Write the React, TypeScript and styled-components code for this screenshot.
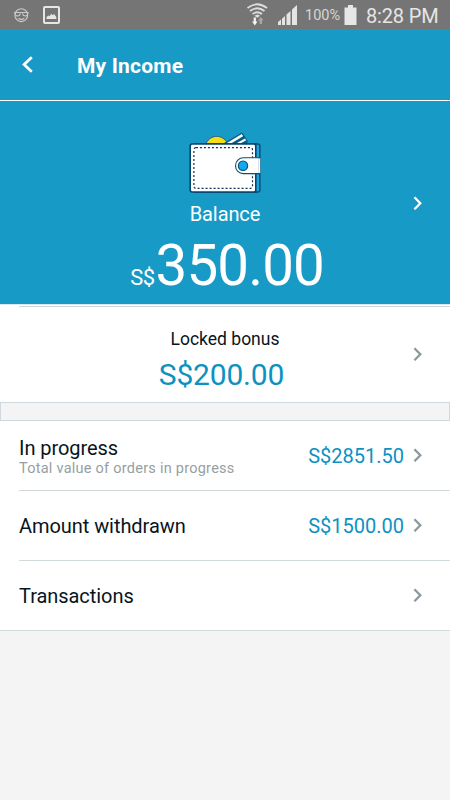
import React from 'react';
import styled, { createGlobalStyle } from 'styled-components';

const GlobalStyle = createGlobalStyle`
  * { box-sizing: border-box; }
  body { margin: 0; background: #f4f4f4; font-family: Roboto, sans-serif; }
`;

const Screen = styled.main`
  width: 450px;
  height: 800px;
  overflow: hidden;
  display: flex;
  flex-direction: column;
  background: #f4f4f4;
  color: #081420;
`;

const StatusBar = styled.header`
  height: 30px;
  flex: none;
  display: flex;
  justify-content: space-between;
  background: #757575;
  border-bottom: 1px solid #77797a;
  color: #e6e6e6;
`;

const StatusGroup = styled.div`
  display: flex;
`;

const BatteryLevel = styled.span`
  width: 39px;
  padding-top: 2px;
  font-size: 14.5px;
  line-height: 28px;
  color: #d6d6d6;
  white-space: nowrap;
`;

const Clock = styled.span`
  width: 85px;
  padding-left: 1px;
  padding-top: 1px;
  font-size: 20px;
  line-height: 30px;
  letter-spacing: -0.15px;
  white-space: nowrap;
`;

const TitleBar = styled.nav`
  height: 71px;
  flex: none;
  display: flex;
  align-items: center;
  gap: 43px;
  padding: 0 0 0 21px;
  background: #189ac6;
  border-bottom: 1px solid #fff;
  color: #fff;
`;

const BackButton = styled.button`
  width: 13px;
  height: 20px;
  padding: 0;
  border: 0;
  display: flex;
  background: none;
  color: inherit;
`;

const Title = styled.h1`
  margin: 2px 0 0;
  font-size: 21px;
  line-height: 24px;
  letter-spacing: 0.2px;
  font-weight: 700;
`;

const BalancePanel = styled.section`
  height: 203px;
  flex: none;
  display: grid;
  grid-template-columns: 37px 1fr 37px;
  background: #189ac6;
  color: #fff;
`;

const PanelContent = styled.div<{ $top: number }>`
  grid-column: 2;
  display: flex;
  flex-direction: column;
  align-items: center;
  padding-top: ${p => p.$top}px;
`;

const BalanceLabel = styled.div`
  margin-top: 7px;
  font-size: 20px;
  line-height: 26px;
  letter-spacing: -0.1px;
`;

const BalanceAmount = styled.div`
  margin: 6px 0 0 4px;
  display: flex;
  align-items: baseline;
  font-size: 56.5px;
  line-height: 66px;
  letter-spacing: -0.9px;
`;

const Currency = styled.span`
  margin-right: 1px;
  font-size: 22px;
  letter-spacing: -0.5px;
`;

const PanelArrow = styled.div<{ $top: number }>`
  grid-column: 3;
  padding-top: ${p => p.$top}px;
`;

const Divider = styled.div`
  height: 3px;
  flex: none;
  background: #fff;
  border-top: 1px solid #dbe8ed;
  &::after {
    content: '';
    display: block;
    height: 1px;
    margin: 1px 0 0 19px;
    background: #cdd6d9;
  }
`;

const BonusPanel = styled.section`
  height: 95px;
  flex: none;
  display: grid;
  grid-template-columns: 37px 1fr 37px;
  background: #fff;
`;

const BonusLabel = styled.div`
  font-size: 17.5px;
  line-height: 22px;
`;

const BonusAmount = styled.div`
  margin-top: 7px;
  margin-right: 7px;
  font-size: 30px;
  line-height: 36px;
  letter-spacing: -0.2px;
  color: #0c92c1;
`;

const Spacer = styled.div`
  height: 19px;
  flex: none;
  border: 1px solid #cfd8dc;
  background: #f4f4f4;
`;

const Row = styled.section<{ $last?: boolean }>`
  height: 70px;
  flex: none;
  display: flex;
  align-items: center;
  padding: 0 27px 2px 19px;
  background: ${p => p.$last
    ? 'linear-gradient(#d2dadd, #d2dadd) bottom / 100% 1px no-repeat, #fff'
    : 'linear-gradient(#d2dadd, #d2dadd) 19px bottom / 100% 1px no-repeat, #fff'};
`;

const RowText = styled.div`
  flex: 1;
  padding-top: 2px;
`;

const RowTitle = styled.div`
  font-size: 20px;
  line-height: 24px;
  letter-spacing: -0.06px;
`;

const RowNote = styled.div`
  font-size: 14.5px;
  line-height: 17px;
  letter-spacing: 0.25px;
  color: #96a0a2;
`;

const RowAmount = styled.div`
  margin-right: 9px;
  padding-top: 2px;
  font-size: 20px;
  color: #0c92c1;
`;

const ChevronIcon = styled.svg`
  display: block;
  flex: none;
`;

const Chevron = ({ color = '#8c989c' }: { color?: string }) => (
  <ChevronIcon width="10" height="14" viewBox="0 0 10 14" fill="none">
    <path d="M1.4 1.2 7.3 7.2 1.4 13.2" stroke={color} strokeWidth="2.3" />
  </ChevronIcon>
);

const NotificationIcons = () => (
  <svg width="70" height="29" viewBox="0 0 70 29" fill="none">
    <g stroke="#cbcbcb" strokeWidth="1.1">
      <circle cx="21.3" cy="15.2" r="6.4" />
      <path d="M14 12.5h14.5M15 13c.4 4 4.2 4 5.4.5M28 13c-.6 4-4.4 4-5.6.5M18.3 18.5q3.2 1.8 6 0" />
    </g>
    <rect x="44" y="7" width="15" height="16" rx="1" stroke="#e6e6e6" strokeWidth="2" />
    <path d="M46.5 19v-2l2-1.5 1.2.7 1.4-2.4 1.5 1.4 1.5-1.2 2.2 3v2Z" fill="#e6e6e6" />
  </svg>
);

const SignalIcons = () => (
  <svg width="60" height="29" viewBox="245 0 60 29" fill="none">
    <g stroke="#ddd" strokeWidth="1.8">
      <path d="M247.5 8q9.7-7.5 19.5 0M250 11q7.3-5.5 14.5 0M252.5 14q4.8-3.5 9.5 0" />
    </g>
    <path d="m254.3 15.7 3-1.3 3 1.3-3 2Z" fill="#ddd" />
    <path d="M253.7 17.5h2.2v4h1.6l-2.7 4-2.7-4h1.6Z" fill="#f5f5f5" />
    <path d="M259.7 24v-3.5h-1.6l2.7-3.5 2.7 3.5h-1.6V24Z" fill="#aaa" />
    <path d="M278 25v-3l3-2.5V25ZM282 25v-6.3l3-2.7v9ZM286.5 25V14.5l4-3.5v14ZM292 25V9.5l5-4.5v20Z" fill="#e4e4e4" />
  </svg>
);

const Battery = () => (
  <svg width="21" height="29" viewBox="0 0 21 29">
    <path d="M4 5h5v2.5h3.5V25H.5V7.5H4Z" fill="#e6e6e6" />
  </svg>
);

const Wallet = () => (
  <svg width="72" height="62" viewBox="189 132 72 62" fill="none">
    <path d="M206 143.5c4.5-9.5 17-9.5 21.5 0Z" fill="#f7dd17" stroke="#26628a" />
    <path d="m224 143.5 18-10.5 5 7.5v3Z" fill="#075a83" stroke="#075a83" strokeLinejoin="round" />
    <path d="m226 143.5 15.8-9.5 1.3 2.3-12.2 7.2Z" fill="#fff" />
    <path d="m236 143.5 9-5 1.2 1.8-5.8 3.2Z" fill="#fff" />
    <rect x="193" y="144" width="66.8" height="48" rx="2" fill="#1ba6e3" stroke="#06466d" strokeWidth="1.4" />
    <rect x="190.2" y="144" width="65.6" height="48" rx="2" fill="#fff" stroke="#06466d" strokeWidth="1.6" />
    <rect x="193.9" y="147.6" width="58.6" height="40.8" rx="2" stroke="#06305f" strokeWidth="1.2" strokeDasharray="2 2" />
    <path d="M259.3 157.8H243.4a7.9 7.9 0 0 0 0 15.8h15.9Z" fill="#fff" stroke="#075078" strokeWidth="1.1" />
    <path d="M259.4 158.4v14.6" stroke="#fff" strokeWidth="1.6" />
    <circle cx="243" cy="165.7" r="4.7" fill="#13a8f2" stroke="#075078" strokeWidth="1.1" />
  </svg>
);

type EntryProps = { title: string; note?: string; amount?: string; last?: boolean };

const Entry = ({ title, note, amount, last }: EntryProps) => (
  <Row $last={last}>
    <RowText>
      <RowTitle>{title}</RowTitle>
      {note && <RowNote>{note}</RowNote>}
    </RowText>
    {amount && <RowAmount>{amount}</RowAmount>}
    <Chevron />
  </Row>
);

export default function App() {
  return (
    <Screen>
      <GlobalStyle />
      <StatusBar>
        <StatusGroup><NotificationIcons /></StatusGroup>
        <StatusGroup>
          <SignalIcons />
          <BatteryLevel>100%</BatteryLevel>
          <Battery />
          <Clock>8:28 PM</Clock>
        </StatusGroup>
      </StatusBar>
      <TitleBar>
        <BackButton aria-label="Back">
          <svg width="13" height="20" viewBox="0 0 13 20" fill="none">
            <path d="M10.8 2.2 3.1 9.5l7.7 7.3" stroke="currentColor" strokeWidth="2.8" />
          </svg>
        </BackButton>
        <Title>My Income</Title>
      </TitleBar>
      <BalancePanel>
        <PanelContent $top={31}>
          <Wallet />
          <BalanceLabel>Balance</BalanceLabel>
          <BalanceAmount><Currency>S$</Currency>350.00</BalanceAmount>
        </PanelContent>
        <PanelArrow $top={95}><Chevron color="#fff" /></PanelArrow>
      </BalancePanel>
      <Divider />
      <BonusPanel>
        <PanelContent $top={21}>
          <BonusLabel>Locked bonus</BonusLabel>
          <BonusAmount>S$200.00</BonusAmount>
        </PanelContent>
        <PanelArrow $top={40}><Chevron /></PanelArrow>
      </BonusPanel>
      <Spacer />
      <Entry title="In progress" note="Total value of orders in progress" amount="S$2851.50" />
      <Entry title="Amount withdrawn" amount="S$1500.00" />
      <Entry title="Transactions" last />
    </Screen>
  );
}
